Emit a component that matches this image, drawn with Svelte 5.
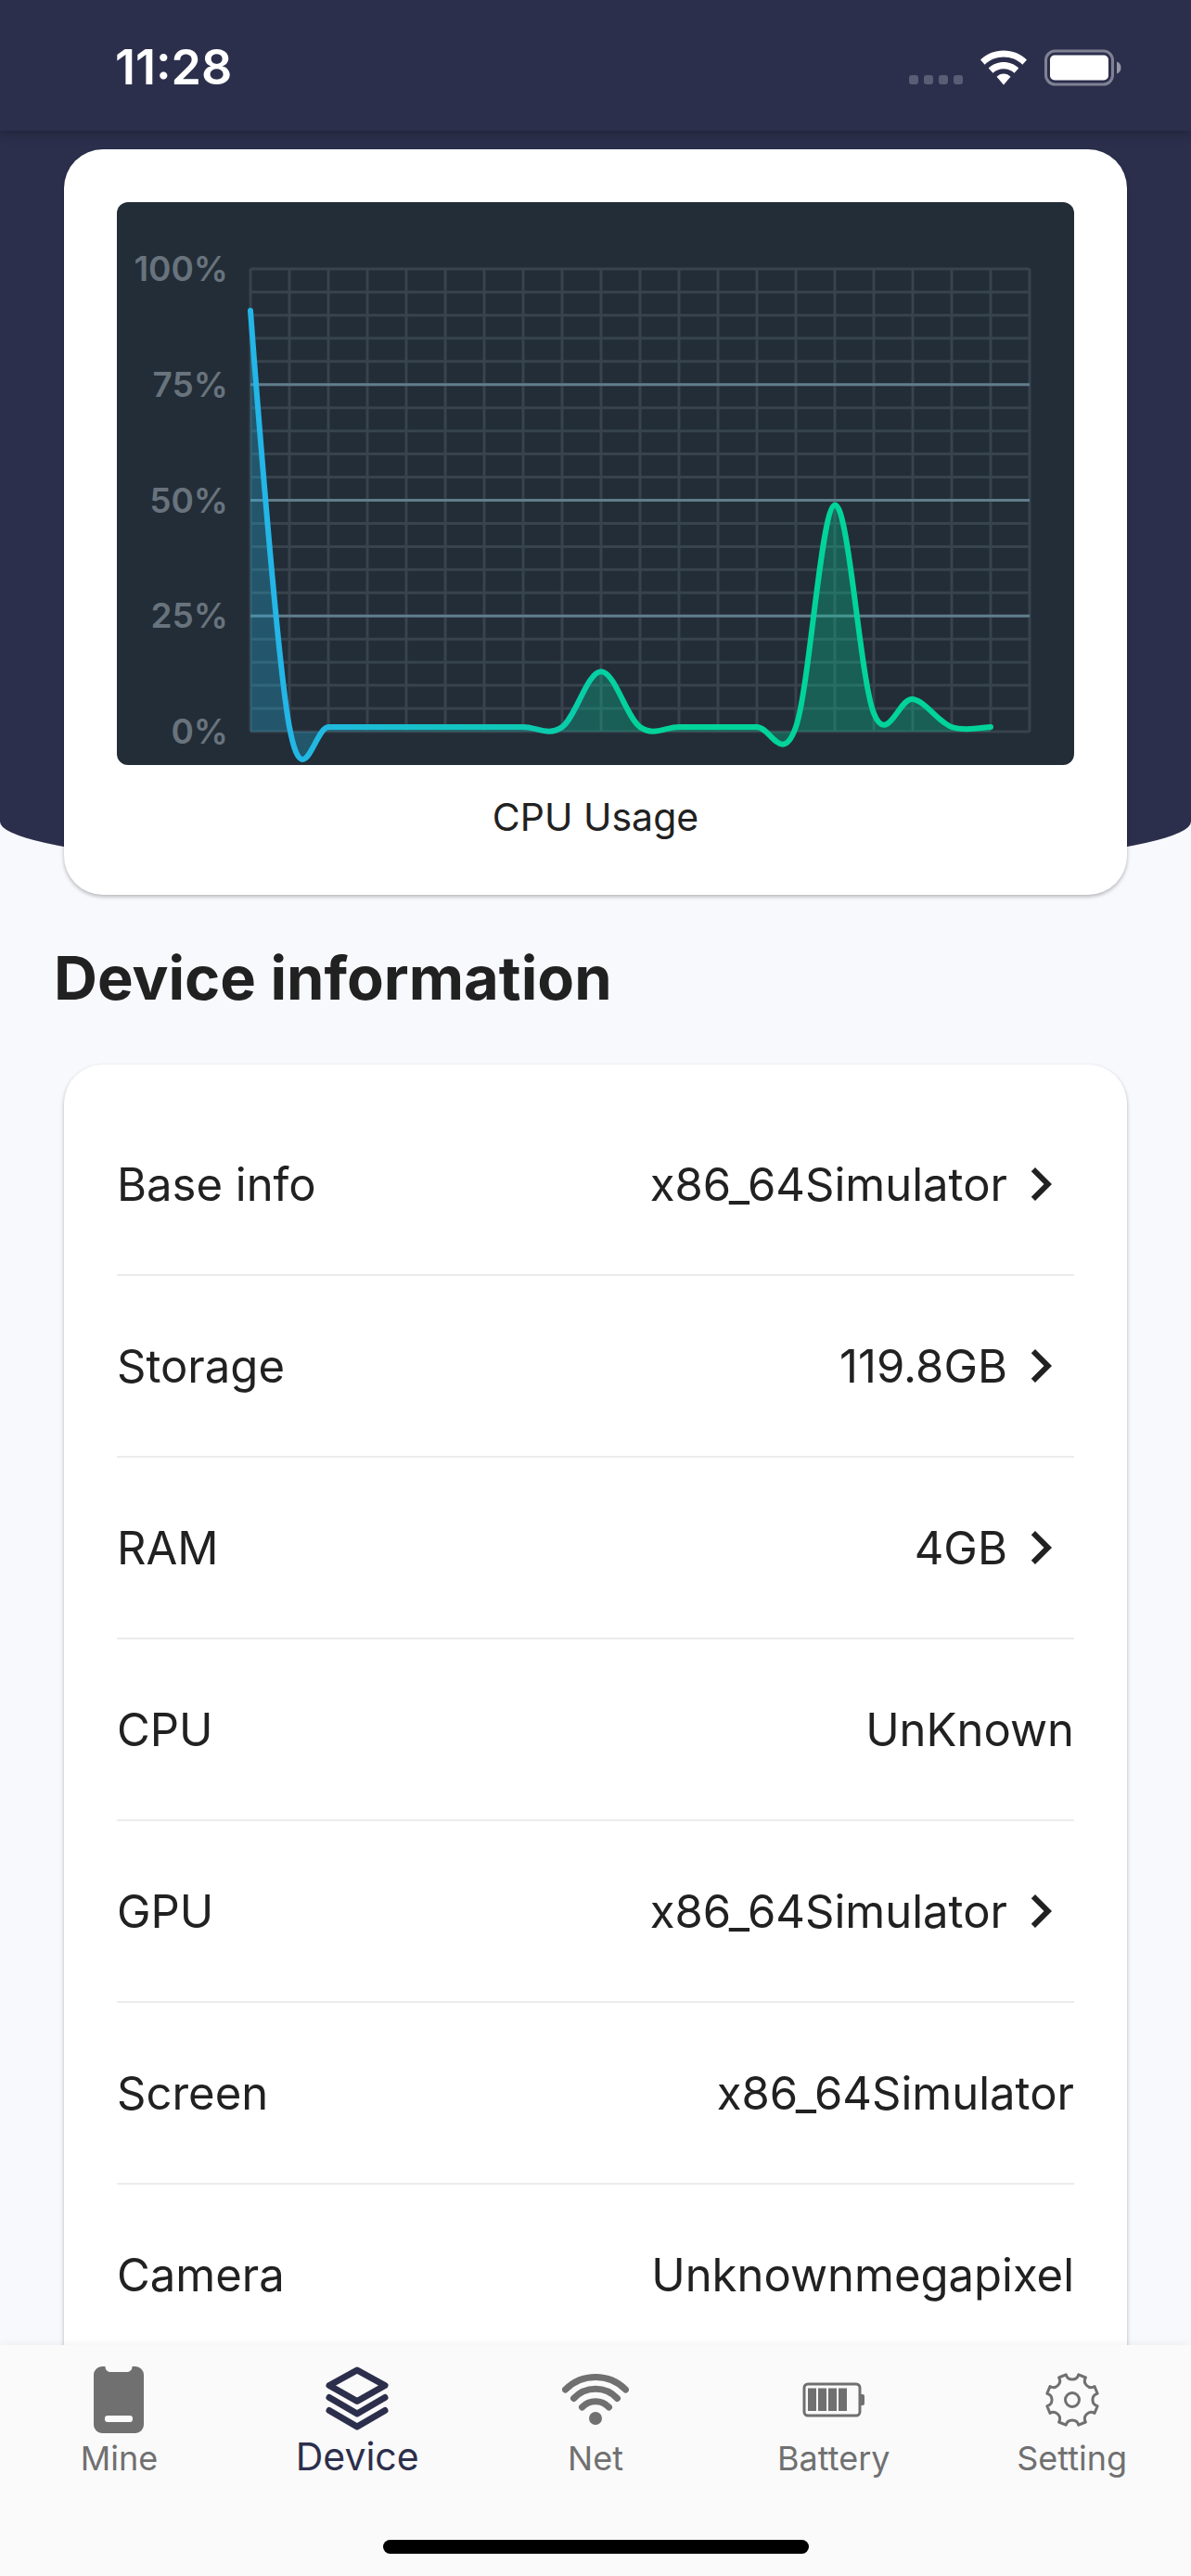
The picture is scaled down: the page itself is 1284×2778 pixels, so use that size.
<script>
  const cpuUsage = [91, 1, 1, 1, 1, 1, 1, 1, 1, 13, 1, 1, 1, 1, 1, 49, 4, 7, 1, 1]

  const info = [
    { label: 'Base info', value: 'x86_64Simulator', link: true },
    { label: 'Storage', value: '119.8GB', link: true },
    { label: 'RAM', value: '4GB', link: true },
    { label: 'CPU', value: 'UnKnown' },
    { label: 'GPU', value: 'x86_64Simulator', link: true },
    { label: 'Screen', value: 'x86_64Simulator' },
    { label: 'Camera', value: 'Unknownmegapixel' },
  ]

  const tabs = ['Mine', 'Device', 'Net', 'Battery', 'Setting']
  let active = $state('Device')

  // chart area inside the 1032x607 viewBox
  const left = 144
  const top = 72
  const stepX = 42
  const height = 499
  const steps = Array.from({ length: 21 }, (_, i) => i)

  const px = (i) => left + i * stepX
  const py = (v) => top + height - (v / 100) * height

  function curve(values, smoothness = 0.35) {
    const pts = values.map((v, i) => [px(i), py(v)])
    let d = `M${pts[0]}`
    let temp = [0, 0]
    for (let i = 1; i < pts.length; i++) {
      const prev = pts[i - 1]
      const cur = pts[i]
      const next = pts[i + 1] ?? cur
      const c1 = [prev[0] + temp[0], prev[1] + temp[1]]
      temp = [((next[0] - prev[0]) / 2) * smoothness, ((next[1] - prev[1]) / 2) * smoothness]
      const c2 = [cur[0] - temp[0], cur[1] - temp[1]]
      d += ` C${c1} ${c2} ${cur}`
    }
    return d
  }

  const line = curve(cpuUsage)
  const area = `${line} L${px(cpuUsage.length - 1)},${py(0)} L${px(0)},${py(0)} Z`

  // eight round bites out of a circle
  function gear(r = 28, bite = 14) {
    const at = (deg) => {
      const a = ((deg - 90) * Math.PI) / 180
      return `${(36 + r * Math.cos(a)).toFixed(2)},${(36 + r * Math.sin(a)).toFixed(2)}`
    }
    let d = ''
    for (let k = 0; k < 8; k++) {
      d += `${k ? 'L' : 'M'}${at(k * 45 - bite)} A7,7 0 0 0 ${at(k * 45 + bite)} `
    }
    return d + 'Z'
  }
</script>

<div class="screen">
  <header class="status">
    <span class="time">11:28</span>
    <div class="indicators">
      <svg class="signal" viewBox="0 0 58 40" aria-hidden="true">
        {#each [0, 16, 32, 48] as x}
          <rect {x} y="28" width="10" height="10" rx="3" />
        {/each}
      </svg>
      <svg class="wifi" viewBox="0 0 52 40" aria-hidden="true">
        <path d="M26 1.500C35.500 1.500 44.500 5 51 11.500L46.300 16.800C41 11.500 33.800 8.600 26 8.600S11 11.500 5.700 16.800L1 11.500C7.500 5 16.500 1.500 26 1.500Z" />
        <path d="M26 14C32 14 38 16.300 42.300 20.600L37.500 25.800C34.500 22.800 30.400 21.200 26 21.200S17.500 22.800 14.500 25.800L9.700 20.600C14 16.300 20 14 26 14Z" />
        <path d="M26 26.500C28.800 26.500 31.500 27.700 33.500 29.800L26 38.500L18.500 29.800C20.500 27.700 23.200 26.500 26 26.500Z" />
      </svg>
      <svg class="power" viewBox="0 0 84 40" aria-hidden="true">
        <rect class="shell" x="1.500" y="2" width="72" height="36" rx="10" />
        <rect x="6" y="6.500" width="63" height="27" rx="5" />
        <path class="nub" d="M78 13.500C81 14.500 82.500 17 82.500 20S81 25.500 78 26.500Z" />
      </svg>
    </div>
  </header>

  <main class="content">
    <section class="hero">
      <figure class="card chart-card">
        <svg class="chart" viewBox="0 0 1032 607" role="img" aria-label="CPU Usage">
          <defs>
            <linearGradient id="usage" gradientUnits="userSpaceOnUse" x1={px(0)} y1="0" x2={px(10)} y2="0">
              <stop offset="0" stop-color="#23b6e6" />
              <stop offset="0.1" stop-color="#23b6e6" />
              <stop offset="1" stop-color="#02d39a" />
            </linearGradient>
          </defs>
          <g class="grid">
            {#each steps as i}
              <line x1={px(i)} x2={px(i)} y1={py(100)} y2={py(0)} />
              <line x1={px(0)} x2={px(20)} y1={py(i * 5)} y2={py(i * 5)} />
            {/each}
            {#each [25, 50, 75] as v}
              <line class="major" x1={px(0)} x2={px(20)} y1={py(v)} y2={py(v)} />
            {/each}
          </g>
          {#each [0, 25, 50, 75, 100] as v}
            <text x="120" y={py(v) + 13}>{v}%</text>
          {/each}
          <path class="area" d={area} />
          <path class="line" d={line} />
        </svg>
        <figcaption>CPU Usage</figcaption>
      </figure>
    </section>

    <h2>Device information</h2>

    <ul class="card info">
      {#each info as item}
        <li>
          <span>{item.label}</span>
          {#if item.link}
            <a class="value" href="#{item.label}">
              {item.value}
              <svg class="chevron" viewBox="0 0 24 24" aria-hidden="true">
                <path d="M10 6L8.590 7.410 13.170 12l-4.580 4.590L10 18l6-6z" />
              </svg>
            </a>
          {:else}
            <span class="value">{item.value}</span>
          {/if}
        </li>
      {/each}
    </ul>
  </main>

  <footer>
    <nav>
      {#each tabs as tab}
        <a href="#{tab}" class:active={tab === active} onclick={() => (active = tab)}>
          <svg class="icon" viewBox="0 0 72 72" aria-hidden="true">
            {#if tab === 'Mine'}
              <path
                class="solid"
                fill-rule="evenodd"
                d="M18 0H21.500C21.500 4 24 6 28 6H44C48 6 50.500 4 50.500 0H54A9 9 0 0 1 63 9V63A9 9 0 0 1 54 72H18A9 9 0 0 1 9 63V9A9 9 0 0 1 18 0ZM24 53A3 3 0 0 0 21 56V57A3 3 0 0 0 24 60H48A3 3 0 0 0 51 57V56A3 3 0 0 0 48 53Z"
              />
            {:else if tab === 'Device'}
              <path class="thick" d="M36 4L66 20.500L36 37.500L6 20.500ZM6 33.500L36 51L66 33.500M6 47.500L36 65L66 47.500" />
            {:else if tab === 'Net'}
              <path class="thick" d="M3.500 25A46 46 0 0 1 68.500 25M12.500 34.500A32 32 0 0 1 59.500 34.500M21.500 44A20 20 0 0 1 50.500 44" />
              <circle class="solid" cx="36" cy="56" r="7" />
            {:else if tab === 'Battery'}
              <rect class="thin" x="4" y="19" width="60" height="34" rx="4" />
              <path class="solid" d="M65 30H67A2 2 0 0 1 69 32V40A2 2 0 0 1 67 42H65Z" />
              {#each [8, 19, 30, 41] as x}
                <rect class="solid" {x} y="23.500" width="9" height="24.500" />
              {/each}
            {:else}
              <path class="thin" d={gear()} />
              <circle class="thin" cx="36" cy="36" r="7.500" />
            {/if}
          </svg>
          <span>{tab}</span>
        </a>
      {/each}
    </nav>
    <div class="home-bar"></div>
  </footer>
</div>

<style>
  :global(body) {
    margin: 0;
  }

  .screen {
    display: flex;
    flex-direction: column;
    height: 100vh;
    overflow: hidden;
    background: #f8f9fd;
    color: #212121;
    font-family: Inter, 'Liberation Sans', sans-serif;
    font-size: 49px;
  }

  .status {
    display: flex;
    flex: none;
    align-items: center;
    justify-content: space-between;
    box-sizing: border-box;
    height: 141px;
    padding: 4px 74px 0 124px;
    background: #2c2f4c;
    color: #fff;
    box-shadow: 0 2px 12px rgba(0, 0, 0, 0.3);
    z-index: 1;
  }

  .time {
    font-size: 52px;
    font-weight: 600;
  }

  .indicators {
    display: flex;
    align-items: center;
    gap: 18px;
  }

  .indicators svg {
    height: 40px;
    fill: #fff;
  }

  .signal {
    opacity: 0.22;
  }

  .indicators .shell {
    fill: none;
    stroke: #fff;
    stroke-width: 3;
    opacity: 0.4;
  }

  .nub {
    opacity: 0.5;
  }

  .content {
    flex: 1;
    min-height: 0;
    overflow-y: auto;
    scrollbar-width: none;
  }

  .hero {
    display: flex;
    padding: 20px 69px 0;
    background: #2c2f4c;
    border-radius: 0 0 50% 50% / 0 0 60px 60px;
  }

  .card {
    background: #fff;
    border-radius: 42px;
    box-shadow: 0 2px 4px rgba(0, 0, 0, 0.28);
  }

  .chart-card {
    flex: 1;
    margin: 0 0 -19px;
    padding: 57px 57px 56px;
  }

  .chart {
    display: block;
    width: 100%;
    background: #232d37;
    border-radius: 12px;
  }

  .grid line {
    stroke: #37434d;
    stroke-width: 3;
  }

  .grid .major {
    stroke: #607d8b;
  }

  .chart text {
    fill: #68737d;
    font-size: 37px;
    font-weight: 600;
    text-anchor: end;
  }

  .area {
    fill: url(#usage);
    opacity: 0.3;
  }

  .line {
    fill: none;
    stroke: url(#usage);
    stroke-width: 6;
    stroke-linecap: round;
  }

  figcaption {
    margin-top: 28px;
    font-size: 41px;
    line-height: 56px;
    text-align: center;
  }

  h2 {
    margin: 73px 58px 57px;
    font-size: 65px;
    font-weight: 700;
    line-height: 72px;
  }

  .info {
    margin: 0 69px;
    padding: 32px 57px;
    list-style: none;
  }

  .info li {
    display: flex;
    align-items: center;
    justify-content: space-between;
    height: 194px;
    border-bottom: 2px solid #ececec;
  }

  .value {
    display: flex;
    align-items: center;
    color: inherit;
    text-decoration: none;
  }

  .chevron {
    width: 72px;
    height: 72px;
    fill: #212121;
  }

  footer {
    flex: none;
    padding-bottom: 24px;
    background: #fafafa;
    box-shadow: 0 0 12px rgba(0, 0, 0, 0.06);
    z-index: 1;
  }

  nav {
    display: flex;
    padding-top: 23px;
  }

  nav a {
    display: flex;
    flex: 1;
    flex-direction: column;
    align-items: center;
    color: #707070;
    font-size: 36px;
    line-height: 54px;
    text-decoration: none;
  }

  nav a.active {
    color: #2c2f4c;
    font-size: 41px;
    line-height: 50px;
  }

  .icon {
    width: 72px;
    height: 72px;
    fill: none;
    stroke-linecap: round;
    stroke-linejoin: round;
  }

  .solid {
    fill: currentColor;
  }

  .thick {
    stroke: currentColor;
    stroke-width: 7;
  }

  .thin {
    stroke: currentColor;
    stroke-width: 3;
  }

  .home-bar {
    width: 459px;
    height: 15px;
    margin: 61px auto 0;
    border-radius: 8px;
    background: #000;
  }
</style>
